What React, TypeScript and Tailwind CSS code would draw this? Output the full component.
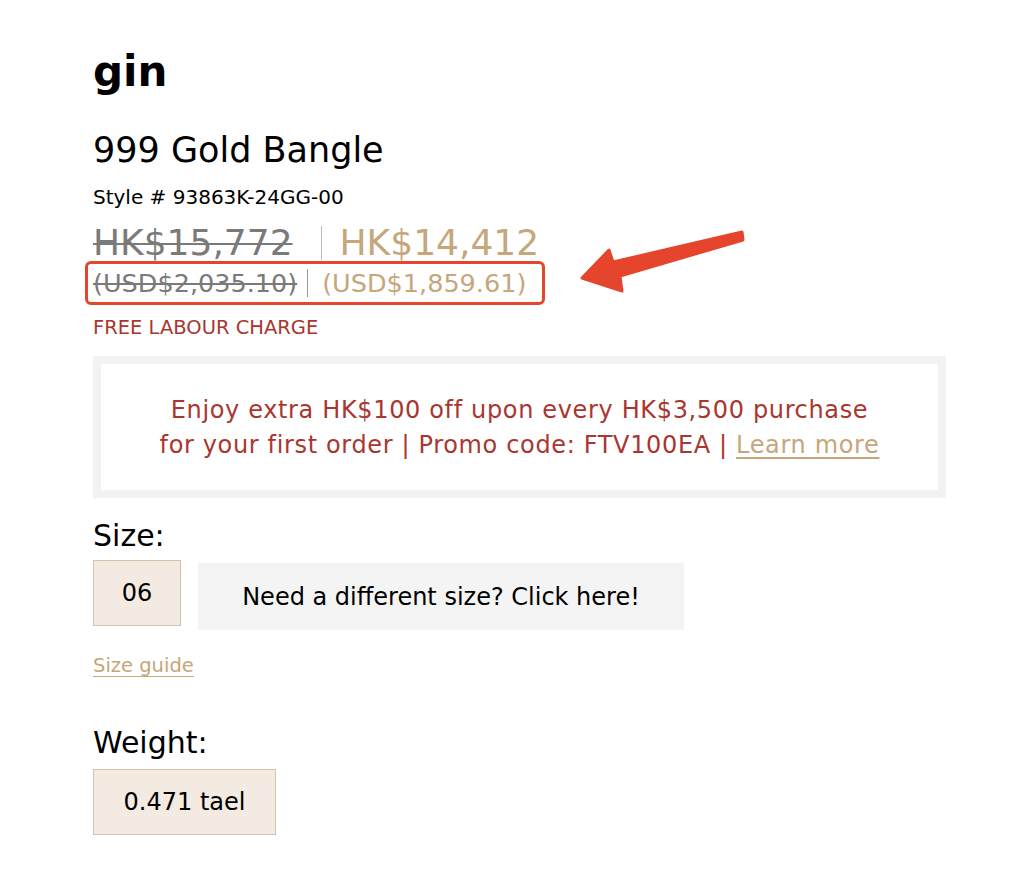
import React from "react";

export default function App() {
  const font = { fontFamily: '"DejaVu Sans", Verdana, sans-serif' };
  return (
    <div className="relative min-h-[877px] w-[1024px] bg-white text-black" style={font}>
      <div className="flex flex-col pl-[93px] pt-[44px] w-[946px]">
        <h1 className="text-[42px] font-bold leading-[56px]">gin</h1>
        <h2 className="mt-[28px] text-[35px] leading-[44px]">999 Gold Bangle</h2>
        <div className="mt-[12px] text-[20px] leading-[26px]">Style # 93863K-24GG-00</div>

        <div className="mt-[12px] flex items-center text-[36px] leading-[42px]">
          <span className="text-[#7a7a7a] line-through decoration-[2px]">HK$15,772</span>
          <span className="ml-[28px] mr-[18px] h-[34px] w-px bg-[#bdbdbd]" />
          <span className="text-[#c6a67b]">HK$14,412</span>
        </div>

        <div className="relative mt-[3px] flex items-center self-start text-[25.5px] leading-[32px]">
          <span className="text-[#7a7a7a] line-through decoration-[1.5px]">(USD$2,035.10)</span>
          <span className="ml-[10px] mr-[14px] h-[28px] w-px bg-[#9a9a9a]" />
          <span className="text-[#c6a67b]">(USD$1,859.61)</span>
          <span className="pointer-events-none absolute left-[-8px] top-[-6px] h-[44px] w-[460px] rounded-[6px] border-[3px] border-[#e5452c]" />
        </div>

        <div className="mt-[16px] text-[19.5px] leading-[26px] text-[#a9362f]">FREE LABOUR CHARGE</div>

        <div className="mt-[15px] border-[8px] border-[#f2f2f2] px-4 pt-[29px] pb-[27px] text-center text-[24px] leading-[35px] tracking-[0.65px] text-[#a9362f]">
          <div>Enjoy extra HK$100 off upon every HK$3,500 purchase</div>
          <div>
            for your first order | Promo code: FTV100EA |{" "}
            <span className="text-[#c6a67b] underline underline-offset-[4px] decoration-[1.5px]">Learn more</span>
          </div>
        </div>

        <div className="mt-[18px] text-[30px] leading-[40px]">Size:</div>
        <div className="mt-[4px] flex items-start gap-[17px]">
          <div className="flex h-[66px] w-[88px] items-center justify-center border border-[#d6c2a8] bg-[#f3ebe1] text-[24px]">06</div>
          <div className="mt-[3px] flex h-[67px] w-[486px] items-center justify-center bg-[#f4f4f4] text-[24px]">Need a different size? Click here!</div>
        </div>
        <div className="mt-[23px] self-start text-[19.5px] leading-[26px] text-[#c6a67b] underline underline-offset-[4px]">Size guide</div>

        <div className="mt-[44px] text-[30px] leading-[40px]">Weight:</div>
        <div className="mt-[6px] flex h-[66px] w-[183px] items-center justify-center border border-[#d6c2a8] bg-[#f3ebe1] text-[24px]">0.471 tael</div>
      </div>

      <svg
        className="pointer-events-none absolute left-[570px] top-[222px]"
        width="185"
        height="80"
        viewBox="0 0 185 80"
      >
        <path
          d="M12 56 L39 28 L43 40 L172 10 L173 18 L50 54 L52 69 Z"
          fill="#e5452c"
          stroke="#e5452c"
          strokeWidth="3"
          strokeLinejoin="round"
        />
      </svg>
    </div>
  );
}
